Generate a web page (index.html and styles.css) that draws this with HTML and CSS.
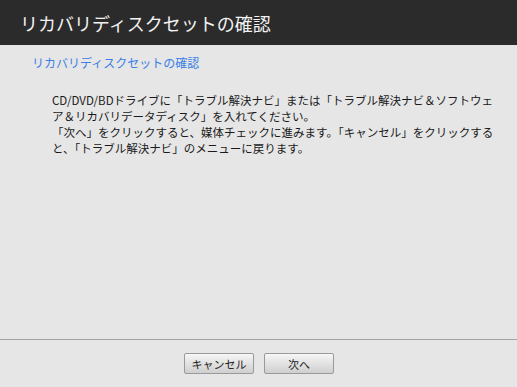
FILE: index.html
```html
<!DOCTYPE html>
<html>
<head>
  <title>リカバリディスクセットの確認</title>
  <link rel="stylesheet" href="styles.css">
</head>
<body>
  <div class="window">
    <div class="header">
      <h1>リカバリディスクセットの確認</h1>
    </div>
    <div class="content">
      <h2>リカバリディスクセットの確認</h2>
      <div class="message">
        <p>CD/DVD/BDドライブに「トラブル解決ナビ」または「トラブル解決ナビ＆ソフトウェ<br>ア＆リカバリデータディスク」を入れてください。</p>
        <p>「次へ」をクリックすると、媒体チェックに進みます。「キャンセル」をクリックする<br>と、「トラブル解決ナビ」のメニューに戻ります。</p>
      </div>
    </div>
    <div class="footer">
      <button type="button" class="btn">キャンセル</button>
      <button type="button" class="btn">次へ</button>
    </div>
  </div>
</body>
</html>
```

FILE: styles.css
```css
* {box-sizing: border-box}
body {
  margin: 0;
  font-family: "Noto Sans CJK JP", "Noto Sans", sans-serif;
  background: #e6e6e6;
}
.window {
  width: 517px;
  height: 387px;
  display: flex;
  flex-direction: column;
}
.header {
  height: 45px;
  background: #2b2b2b;
  padding: 0 0 0 20px;
  display: flex;
  align-items: center;
}
.header h1 {
  margin: 0;
  color: #f2f2f2;
  font-size: 18px;
  font-weight: normal;
  line-height: 1;
}
.content {
  flex: 1;
  padding: 11px 0 0 32px;
}
.content h2 {
  margin: 0;
  color: #3a7fe6;
  font-size: 12px;
  font-weight: normal;
  line-height: 14px;
}
.message {
  padding: 22px 0 0 20px;
}
.message p {
  margin: 0;
  font-size: 11.5px;
  line-height: 16px;
  color: #1a1a1a;
  white-space: nowrap;
}
.footer {
  height: 48px;
  border-top: 1px solid #a3a3a3;
  display: flex;
  justify-content: center;
  align-items: center;
  gap: 10px;
  padding-left: 1px;
}
.btn {
  width: 70px;
  height: 21px;
  padding: 0;
  font-family: "Noto Sans CJK JP", sans-serif;
  font-size: 11px;
  color: #222;
  border: 1px solid #9a9a9a;
  border-radius: 2px;
  background: linear-gradient(#f6f6f6, #e2e2e2 50%, #cfcfcf);
  cursor: pointer;
}
```
